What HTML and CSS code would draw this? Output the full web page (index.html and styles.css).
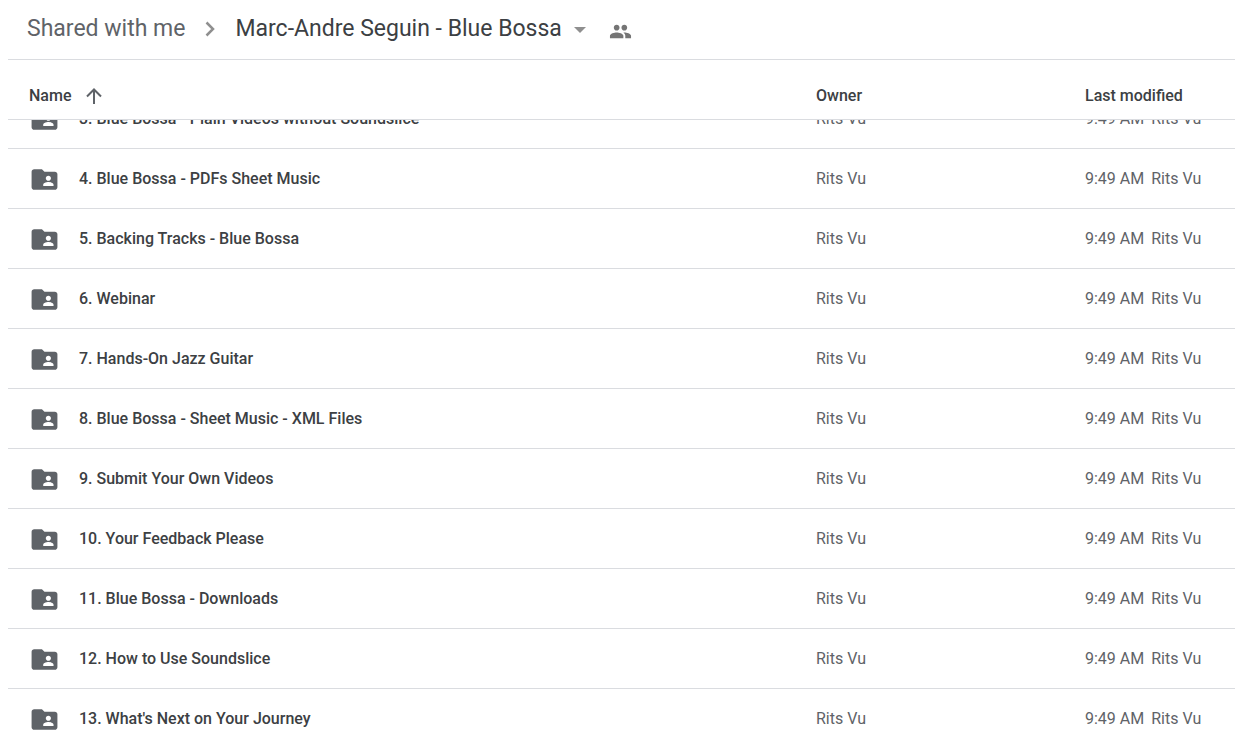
FILE: index.html
```html
<!DOCTYPE html>
<html lang="en">
<head>
<meta charset="utf-8">
<title>Marc-Andre Seguin - Blue Bossa</title>
<link rel="stylesheet" href="styles.css">
</head>
<body>
<svg class="sprite" aria-hidden="true">
  <symbol id="folder" viewBox="0 0 24 24"><path fill-rule="evenodd" d="M20 6h-8l-2-2H4c-1.100 0-1.990.9-1.990 2L2 18c0 1.100.9 2 2 2h16c1.100 0 2-.9 2-2V8c0-1.100-.9-2-2-2zm-5 3c1.100 0 2 .9 2 2s-.9 2-2 2-2-.9-2-2 .9-2 2-2zm4 8h-8v-1c0-1.330 2.670-2 4-2s4 .67 4 2v1z"/></symbol>
</svg>
<nav class="crumbs" aria-label="Breadcrumb">
  <a class="crumb" href="#">Shared with me</a>
  <svg class="chevron" viewBox="0 0 10 16" aria-hidden="true"><path d="M1.500 1.500L8 8l-6.500 6.500"/></svg>
  <button class="current" type="button">Marc-Andre Seguin - Blue Bossa<svg class="caret" viewBox="0 0 12 6" aria-hidden="true"><path d="M0 0h12L6 6z"/></svg></button>
  <button class="people" type="button" aria-label="Manage people"><svg class="people-icon" viewBox="0 0 24 24" aria-hidden="true"><path d="M16 11c1.660 0 2.990-1.340 2.990-3S17.660 5 16 5s-3 1.340-3 3 1.340 3 3 3zm-8 0c1.660 0 2.990-1.340 2.990-3S9.660 5 8 5 5 6.340 5 8s1.340 3 3 3zm0 2c-2.330 0-7 1.170-7 3.500V19h14v-2.500c0-2.330-4.670-3.500-7-3.500zm8 0c-.29 0-.62.02-.97.05 1.160.84 1.970 1.970 1.970 3.450V19h6v-2.500c0-2.330-4.670-3.500-7-3.500z"/></svg></button>
</nav>
<table class="files">
  <thead class="head">
    <tr class="row"><th class="sort" scope="col" aria-sort="ascending">Name<svg class="arrow" viewBox="0 0 16 16" aria-hidden="true"><path d="M8 16V2M1 8.500L8 1.500l7 7"/></svg></th><th scope="col">Owner</th><th scope="col">Last modified</th></tr>
  </thead>
  <tbody class="list">
    <tr class="row"><td class="name"><svg class="folder"><use href="#folder"/></svg>3. Blue Bossa - Plain Videos without Soundslice</td><td>Rits Vu</td><td class="modified"><span>9:49 AM</span><span>Rits Vu</span></td></tr>
    <tr class="row"><td class="name"><svg class="folder"><use href="#folder"/></svg>4. Blue Bossa - PDFs Sheet Music</td><td>Rits Vu</td><td class="modified"><span>9:49 AM</span><span>Rits Vu</span></td></tr>
    <tr class="row"><td class="name"><svg class="folder"><use href="#folder"/></svg>5. Backing Tracks - Blue Bossa</td><td>Rits Vu</td><td class="modified"><span>9:49 AM</span><span>Rits Vu</span></td></tr>
    <tr class="row"><td class="name"><svg class="folder"><use href="#folder"/></svg>6. Webinar</td><td>Rits Vu</td><td class="modified"><span>9:49 AM</span><span>Rits Vu</span></td></tr>
    <tr class="row"><td class="name"><svg class="folder"><use href="#folder"/></svg>7. Hands-On Jazz Guitar</td><td>Rits Vu</td><td class="modified"><span>9:49 AM</span><span>Rits Vu</span></td></tr>
    <tr class="row"><td class="name"><svg class="folder"><use href="#folder"/></svg>8. Blue Bossa - Sheet Music - XML Files</td><td>Rits Vu</td><td class="modified"><span>9:49 AM</span><span>Rits Vu</span></td></tr>
    <tr class="row"><td class="name"><svg class="folder"><use href="#folder"/></svg>9. Submit Your Own Videos</td><td>Rits Vu</td><td class="modified"><span>9:49 AM</span><span>Rits Vu</span></td></tr>
    <tr class="row"><td class="name"><svg class="folder"><use href="#folder"/></svg>10. Your Feedback Please</td><td>Rits Vu</td><td class="modified"><span>9:49 AM</span><span>Rits Vu</span></td></tr>
    <tr class="row"><td class="name"><svg class="folder"><use href="#folder"/></svg>11. Blue Bossa - Downloads</td><td>Rits Vu</td><td class="modified"><span>9:49 AM</span><span>Rits Vu</span></td></tr>
    <tr class="row"><td class="name"><svg class="folder"><use href="#folder"/></svg>12. How to Use Soundslice</td><td>Rits Vu</td><td class="modified"><span>9:49 AM</span><span>Rits Vu</span></td></tr>
    <tr class="row"><td class="name"><svg class="folder"><use href="#folder"/></svg>13. What's Next on Your Journey</td><td>Rits Vu</td><td class="modified"><span>9:49 AM</span><span>Rits Vu</span></td></tr>
  </tbody>
</table>
</body>
</html>
```
FILE: styles.css
```css
* { box-sizing: border-box; }
html, body { height: 100%; }
body {
  margin: 0;
  padding-left: 8px;
  overflow: hidden;
  background: #fff;
  color: #5f6368;
  font: 16px/20px Roboto, sans-serif;
}
.sprite { position: absolute; width: 0; height: 0; }
.crumbs {
  display: flex;
  align-items: center;
  height: 60px;
  padding: 0 0 1px 19px;
  border-bottom: 1px solid #dadce0;
  font-size: 23px;
  line-height: 28px;
}
.crumb { color: #5f6368; text-decoration: none; }
.chevron {
  width: 10px;
  height: 16px;
  margin: 0 20px;
  fill: none;
  stroke: #8f8f8f;
  stroke-width: 2.5;
}
button {
  display: flex;
  align-items: center;
  padding: 0;
  border: 0;
  background: none;
  font: inherit;
}
.current { gap: 12px; color: #3c4043; }
.caret { width: 12px; height: 6px; margin-top: 2px; fill: #8f8f8f; }
.people { margin-left: 23px; padding-top: 4px; }
.people-icon { width: 23px; height: 23px; fill: #757575; }
.files, .head, .list { display: block; }
.row {
  display: grid;
  grid-template-columns: 1fr 269px 150px;
  align-items: center;
  height: 60px;
  border-bottom: 1px solid #dadce0;
}
.head {
  position: relative;
  z-index: 1;
  background: #fff;
  color: #3c4043;
}
.head .row { padding-top: 12px; }
th, td { padding: 0; text-align: left; font-weight: 400; }
th { font-weight: 500; }
.sort { display: flex; align-items: center; gap: 15px; padding-left: 21px; }
.arrow { width: 16px; height: 16px; fill: none; stroke: #5f6368; stroke-width: 2; }
/* The list is scrolled half a row under the header. */
.list { margin-top: -31px; }
.name {
  display: flex;
  align-items: center;
  gap: 19px;
  padding: 1px 0 0 21px;
  color: #3c4043;
  font-weight: 500;
}
.folder { width: 31px; height: 31px; fill: #5f6368; }
.modified { display: flex; gap: 7px; }
```
